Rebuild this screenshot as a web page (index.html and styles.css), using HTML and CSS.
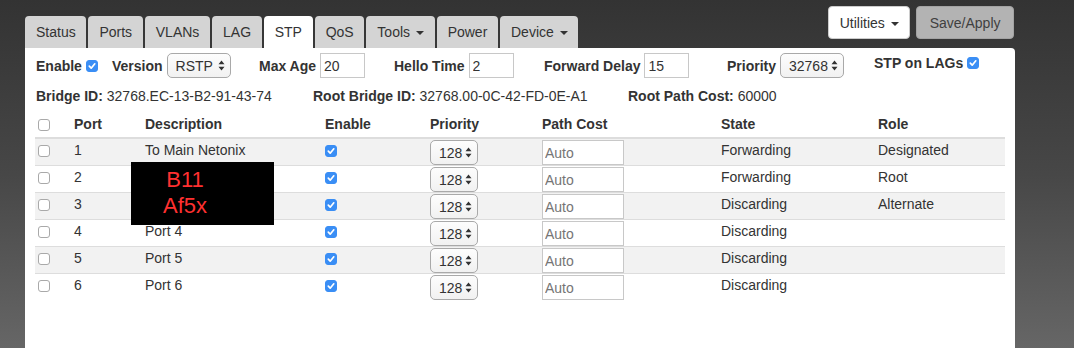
FILE: index.html
```html
<!DOCTYPE html>
<html>
<head>
<meta charset="utf-8">
<link rel="stylesheet" href="styles.css">
</head>
<body>
<div class="page">
  <div class="topbar">
    <ul class="tabs">
      <li class="tab">Status</li>
      <li class="tab">Ports</li>
      <li class="tab">VLANs</li>
      <li class="tab">LAG</li>
      <li class="tab active">STP</li>
      <li class="tab">QoS</li>
      <li class="tab">Tools <span class="caret"></span></li>
      <li class="tab">Power</li>
      <li class="tab">Device <span class="caret"></span></li>
    </ul>
    <div class="actions">
      <button class="btn btn-default">Utilities <span class="caret"></span></button>
      <button class="btn btn-save">Save/Apply</button>
    </div>
  </div>
  <div class="panel">
    <div class="settings">
      <div class="field"><span class="lbl">Enable</span><input type="checkbox" class="cb" checked></div>
      <div class="field"><span class="lbl">Version</span><select class="sel sel-wide"><option>RSTP</option></select></div>
      <div class="field"><span class="lbl">Max Age</span><input type="text" class="txt txt-sm" value="20"></div>
      <div class="field"><span class="lbl">Hello Time</span><input type="text" class="txt txt-sm" value="2"></div>
      <div class="field"><span class="lbl">Forward Delay</span><input type="text" class="txt txt-sm" value="15"></div>
      <div class="field"><span class="lbl">Priority</span><select class="sel sel-wide"><option>32768</option></select></div>
      <div class="field field-top"><span class="lbl">STP on LAGs</span><input type="checkbox" class="cb" checked></div>
    </div>
    <div class="ids">
      <div><b>Bridge ID:</b> 32768.EC-13-B2-91-43-74</div>
      <div><b>Root Bridge ID:</b> 32768.00-0C-42-FD-0E-A1</div>
      <div><b>Root Path Cost:</b> 60000</div>
    </div>
    <div class="table-wrap">
      <table class="ports">
        <colgroup>
          <col class="c1"><col class="c2"><col class="c3"><col class="c4"><col class="c5"><col class="c6"><col class="c7"><col class="c8">
        </colgroup>
        <thead>
          <tr>
            <th><input type="checkbox" class="cb"></th>
            <th>Port</th>
            <th>Description</th>
            <th>Enable</th>
            <th>Priority</th>
            <th>Path Cost</th>
            <th>State</th>
            <th>Role</th>
          </tr>
        </thead>
        <tbody>
          <tr>
            <td><input type="checkbox" class="cb row-cb"></td><td>1</td><td>To Main Netonix</td>
            <td><input type="checkbox" class="cb row-cb" checked></td>
            <td><select class="sel sel-row"><option>128</option></select></td>
            <td><input type="text" class="txt txt-cost" placeholder="Auto"></td>
            <td>Forwarding</td><td>Designated</td>
          </tr>
          <tr>
            <td><input type="checkbox" class="cb row-cb"></td><td>2</td><td></td>
            <td><input type="checkbox" class="cb row-cb" checked></td>
            <td><select class="sel sel-row"><option>128</option></select></td>
            <td><input type="text" class="txt txt-cost" placeholder="Auto"></td>
            <td>Forwarding</td><td>Root</td>
          </tr>
          <tr>
            <td><input type="checkbox" class="cb row-cb"></td><td>3</td><td></td>
            <td><input type="checkbox" class="cb row-cb" checked></td>
            <td><select class="sel sel-row"><option>128</option></select></td>
            <td><input type="text" class="txt txt-cost" placeholder="Auto"></td>
            <td>Discarding</td><td>Alternate</td>
          </tr>
          <tr>
            <td><input type="checkbox" class="cb row-cb"></td><td>4</td><td>Port 4</td>
            <td><input type="checkbox" class="cb row-cb" checked></td>
            <td><select class="sel sel-row"><option>128</option></select></td>
            <td><input type="text" class="txt txt-cost" placeholder="Auto"></td>
            <td>Discarding</td><td></td>
          </tr>
          <tr>
            <td><input type="checkbox" class="cb row-cb"></td><td>5</td><td>Port 5</td>
            <td><input type="checkbox" class="cb row-cb" checked></td>
            <td><select class="sel sel-row"><option>128</option></select></td>
            <td><input type="text" class="txt txt-cost" placeholder="Auto"></td>
            <td>Discarding</td><td></td>
          </tr>
          <tr>
            <td><input type="checkbox" class="cb row-cb"></td><td>6</td><td>Port 6</td>
            <td><input type="checkbox" class="cb row-cb" checked></td>
            <td><select class="sel sel-row"><option>128</option></select></td>
            <td><input type="text" class="txt txt-cost" placeholder="Auto"></td>
            <td>Discarding</td><td></td>
          </tr>
        </tbody>
      </table>
      <div class="redact"><div class="redact-text">B11<br>Af5x</div></div>
    </div>
  </div>
</div>
</body>
</html>
```

FILE: styles.css
```css
* { box-sizing: border-box; }
html, body { margin: 0; padding: 0; }
body {
  height: 348px;
  overflow: hidden;
  background: linear-gradient(#333333 0%, #474747 50%, #666666 100%);
  font-family: "Liberation Sans", Arial, Helvetica, sans-serif;
  font-size: 14px;
  color: #333;
}
.page {
  width: 1015px;
  padding-left: 25px;
}
.topbar {
  height: 48px;
  display: flex;
  justify-content: space-between;
}
.tabs {
  list-style: none;
  margin: 0;
  padding: 0;
  display: flex;
  align-self: flex-end;
  gap: 2px;
}
.tab {
  height: 32px;
  line-height: 32px;
  padding: 0 10.7px 0 11px;
  background: #d4d4d4;
  border-radius: 4px 4px 0 0;
  color: #333;
  white-space: nowrap;
}
.tab.active { background: #fff; }
.caret {
  display: inline-block;
  width: 0;
  height: 0;
  margin-left: 2px;
  vertical-align: middle;
  border-top: 4px solid #333;
  border-left: 4px solid transparent;
  border-right: 4px solid transparent;
}
.actions {
  display: flex;
  gap: 6px;
  margin-top: 6px;
  align-self: flex-start;
  margin-right: 1px;
}
.btn {
  height: 33px;
  padding: 0 12px;
  font-family: inherit;
  font-size: 14px;
  color: #333;
  border-radius: 4px;
  border: 1px solid #ccc;
}
.btn-default { background: #fff; padding: 0 10.5px; }
.btn-save { background: #b3b3b3; border-color: #a3a3a3; color: #404040; padding: 0 12.5px; }

.panel {
  background: #fff;
  height: 300px;
  border-radius: 0 4px 0 0;
  padding: 5px 10px 0 11px;
}
.settings {
  display: grid;
  grid-template-columns: 76px 147px 135px 150px 183px 147px auto;
  height: 25px;
  align-items: center;
}
.field {
  display: flex;
  align-items: center;
  gap: 4px;
  white-space: nowrap;
}
.field-top { align-self: start; margin-top: 0; }
.lbl { font-weight: bold; }
.field-top .lbl { line-height: 20px; }

.cb {
  -webkit-appearance: none;
  appearance: none;
  width: 12px;
  height: 12px;
  margin: 0;
  border: 1px solid #a9a9a9;
  border-radius: 3px;
  background: #fff;
  flex: none;
}
.cb:checked {
  border-color: #3a8ef5;
  background: #3a8ef5 url("data:image/svg+xml;utf8,<svg xmlns='http://www.w3.org/2000/svg' width='10' height='10'><path d='M2.3 5.2l1.9 2 3.6-4.4' stroke='white' stroke-width='1.7' fill='none' stroke-linecap='round' stroke-linejoin='round'/></svg>") center/10px 10px no-repeat;
}

.sel {
  -webkit-appearance: none;
  appearance: none;
  height: 25px;
  margin: 0;
  font-family: inherit;
  font-size: 14px;
  color: #333;
  border: 1px solid #a9a9a9;
  border-radius: 5px;
  background-image: url("data:image/svg+xml;utf8,<svg xmlns='http://www.w3.org/2000/svg' width='7' height='11'><path d='M3.5 0.5L6.5 4.3H0.5z M0.5 6.7H6.5L3.5 10.5z' fill='%23333'/></svg>"), linear-gradient(#fdfdfd, #f1f1f1);
  background-repeat: no-repeat;
  background-position: right 5px center, 0 0;
  padding: 0 11px 0 8px;
}
.sel-wide { width: 64px; }
.sel-row { width: 48px; display: block; }

.txt {
  height: 25px;
  margin: 0;
  font-family: inherit;
  font-size: 14px;
  color: #333;
  border: 1px solid #c8c8c8;
  border-radius: 0;
  padding: 0 3px;
  background: #fff;
}
.txt-sm { width: 45px; }
.txt-cost { width: 82px; height: 25px; display: block; padding: 0 2px; }
.txt-cost::placeholder { color: #757575; }

.ids {
  display: grid;
  grid-template-columns: 277px 315px auto;
  margin-top: 8px;
  line-height: 20px;
}

.table-wrap {
  position: relative;
  margin-top: 6px;
  width: 970px;
  margin-left: -1px;
}
.ports {
  width: 970px;
  border-collapse: collapse;
  table-layout: fixed;
}
.c1 { width: 36px; }
.c2 { width: 71px; }
.c3 { width: 180px; }
.c4 { width: 105px; }
.c5 { width: 112px; }
.c6 { width: 179px; }
.c7 { width: 157px; }
.c8 { width: 130px; }
.ports th {
  text-align: left;
  font-weight: bold;
  line-height: 20px;
  padding: 2px 3px 3px;
  border-bottom: 2px solid #dddddd;
  vertical-align: middle;
}
.ports th .cb { display: block; margin-top: 1px; }
.ports td {
  line-height: 20px;
  padding: 1px 3px 0;
  border-top: 1px solid #dddddd;
  vertical-align: top;
  white-space: nowrap;
}
.ports tbody tr:first-child td { border-top: none; }
.ports tbody tr:nth-child(odd) td { background: #f2f2f2; }
.row-cb { display: block; margin-top: 5px; }

.redact {
  position: absolute;
  left: 96px;
  top: 50px;
  width: 143px;
  height: 63px;
  background: #000;
  padding: 5px 0 0 32px;
}
.redact-text {
  display: inline-block;
  text-align: center;
  color: #ff3030;
  font-size: 22px;
  line-height: 26px;
}
```
